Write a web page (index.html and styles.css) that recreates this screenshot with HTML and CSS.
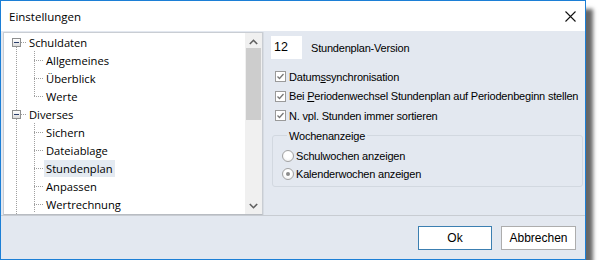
FILE: index.html
```html
<!DOCTYPE html>
<html lang="de">
<head>
    <meta charset="UTF-8" />
    <title>Einstellungen</title>
    <link rel="stylesheet" href="styles.css">
</head>
<body>

    <div class="window">
        <div class="titlebar">
            <span class="title">Einstellungen</span>
            <svg class="close" width="11" height="11" viewBox="0 0 11 11">
                <path d="M0.5 0.5 L10.5 10.5 M10.5 0.5 L0.5 10.5" stroke="#111" stroke-width="1.1" fill="none" />
            </svg>
        </div>

        <div class="main">
            <div class="tree-panel">
                <div class="tree-view">
                    <ul class="tree-list">
                        <li>
                            <div class="row"><span class="toggle"></span><span class="dots"></span><span class="label">Schuldaten</span></div>
                            <ul class="children">
                                <li class="row"><span class="dots"></span><span class="label">Allgemeines</span></li>
                                <li class="row"><span class="dots"></span><span class="label">Überblick</span></li>
                                <li class="row"><span class="dots"></span><span class="label">Werte</span></li>
                            </ul>
                        </li>
                        <li>
                            <div class="row"><span class="toggle"></span><span class="dots"></span><span class="label">Diverses</span></div>
                            <ul class="children open">
                                <li class="row"><span class="dots"></span><span class="label">Sichern</span></li>
                                <li class="row"><span class="dots"></span><span class="label">Dateiablage</span></li>
                                <li class="row"><span class="dots"></span><span class="label selected">Stundenplan</span></li>
                                <li class="row"><span class="dots"></span><span class="label">Anpassen</span></li>
                                <li class="row"><span class="dots"></span><span class="label">Wertrechnung</span></li>
                            </ul>
                        </li>
                    </ul>
                </div>
                <div class="scrollbar">
                    <div class="arrow">
                        <svg width="9" height="6" viewBox="0 0 9 6"><path d="M0.8 5 L4.5 1.3 L8.2 5" stroke="#606060" stroke-width="1.6" fill="none" /></svg>
                    </div>
                    <div class="track"><div class="thumb"></div></div>
                    <div class="arrow">
                        <svg width="9" height="6" viewBox="0 0 9 6"><path d="M0.8 1 L4.5 4.7 L8.2 1" stroke="#606060" stroke-width="1.6" fill="none" /></svg>
                    </div>
                </div>
            </div>

            <div class="pane">
                <div class="version-row">
                    <div class="number-box">12</div>
                    <span>Stundenplan-Version</span>
                </div>

                <div class="check-row"><span class="checkbox"></span><span>Datum<u>s</u>synchronisation</span></div>
                <div class="check-row"><span class="checkbox"></span><span>Bei <u>P</u>eriodenwechsel Stundenplan auf Periodenbeginn stellen</span></div>
                <div class="check-row"><span class="checkbox"></span><span>N. vpl. Stunden immer sortieren</span></div>

                <fieldset class="group">
                    <legend>Wochenanzeige</legend>
                    <div class="radio-row"><span class="radio"></span><span>Schulwochen anzeigen</span></div>
                    <div class="radio-row"><span class="radio checked"></span><span>Kalenderwochen anzeigen</span></div>
                </fieldset>
            </div>
        </div>

        <div class="footer">
            <button class="btn default">Ok</button>
            <button class="btn">Abbrechen</button>
        </div>
    </div>

</body>
</html>
```

FILE: styles.css
```css
:root {
    --accent: #1c7fd6;
    --face: #e3e8f0;
    --line: #a0a0a0;
    --text: #000;
}

* {
    box-sizing: border-box;
    margin: 0;
    padding: 0;
}

body {
    background: #fff;
    font-family: 'Liberation Sans', Arial, sans-serif;
    color: var(--text);
}

.window {
    width: 586px;
    height: 260px;
    border: 1px solid var(--accent);
    background: var(--face);
    display: flex;
    flex-direction: column;
    box-shadow: 8px 8px 4px -1px rgba(0, 0, 0, 0.6);
}

/* Title bar */
.titlebar {
    height: 30px;
    background: #fff;
    display: flex;
    align-items: center;
    justify-content: space-between;
    padding: 0 9px 0 8px;
    flex-shrink: 0;
}

.title {
    font-family: 'Open Sans', 'Noto Sans', sans-serif;
    font-size: 11.5px;
}

.close {
    display: block;
}

/* Main area */
.main {
    height: 185px;
    display: flex;
    padding: 1px 0 0 2px;
    border-bottom: 1px solid #c8ccd2;
    flex-shrink: 0;
}

.tree-panel {
    width: 260px;
    flex-shrink: 0;
    display: flex;
    background: #fff;
    border: 1px solid #c9cdd3;
    border-bottom-color: #b8bcc2;
}

.tree-view {
    flex: 1;
    overflow: hidden;
    font-family: 'Open Sans', 'Noto Sans', sans-serif;
    font-size: 11.2px;
    color: #000;
}

.tree-list {
    list-style: none;
    padding: 0 0 20px 8px;
    background: repeating-linear-gradient(var(--line) 0 1px, transparent 1px 2px) 12px 10px / 1px 100% no-repeat;
}

.row {
    display: flex;
    align-items: center;
    height: 18px;
}

.toggle {
    width: 9px;
    height: 9px;
    border: 1px solid #8e8f8f;
    background: linear-gradient(#fff, #dcdcdc);
    display: flex;
    align-items: center;
    justify-content: center;
}

.toggle::after {
    content: '';
    width: 5px;
    height: 1px;
    background: #2b3f6b;
}

.dots {
    width: 5px;
    border-top: 1px dotted var(--line);
    margin-right: 1px;
}

.label {
    padding: 0 2px;
    line-height: 17px;
}

.label.selected {
    background: #e4eaf1;
}

.children {
    list-style: none;
    margin-left: 22px;
    background: repeating-linear-gradient(var(--line) 0 1px, transparent 1px 2px) 0 0 / 1px calc(100% - 9px) no-repeat;
}

.children.open {
    background-size: 1px 100%;
}

.children .dots {
    width: 9px;
}

/* Scrollbar */
.scrollbar {
    width: 17px;
    background: #f0f0f0;
    display: flex;
    flex-direction: column;
}

.arrow {
    height: 17px;
    display: flex;
    align-items: center;
    justify-content: center;
}

.track {
    flex: 1;
    padding: 0 1px;
}

.thumb {
    height: 72px;
    margin-top: -2px;
    background: #cdcdcd;
}

/* Right pane */
.pane {
    flex: 1;
    min-width: 0;
    padding: 4px 2px 0 7px;
    font-size: 11px;
    letter-spacing: -0.2px;
    white-space: nowrap;
    border-left: 1px solid #d7dce3;
}

.version-row {
    display: flex;
    align-items: center;
    gap: 9px;
    margin-bottom: 8px;
}

.number-box {
    width: 31px;
    height: 23px;
    background: #fff;
    font-size: 12.5px;
    letter-spacing: 0;
    padding: 4px 0 0 3px;
}

.check-row {
    display: flex;
    align-items: center;
    gap: 3px;
    height: 19.5px;
    padding-left: 4px;
}

.checkbox {
    width: 11px;
    height: 11px;
    border: 1px solid #9a9a9a;
    background: #fff url("data:image/svg+xml,%3Csvg xmlns='http://www.w3.org/2000/svg' width='9' height='9'%3E%3Cpath d='M1.5 4.5 L3.5 6.5 L7.5 2' stroke='%23777' stroke-width='1.3' fill='none'/%3E%3C/svg%3E") center / 9px 9px no-repeat;
}

.group {
    margin-top: 4px;
    margin-left: 1px;
    border: 1px solid #d2d8e0;
    border-radius: 3px;
    padding: 5px 0 6px 9px;
    height: 57px;
}

.group legend {
    padding: 0 2px;
    margin-left: 5px;
}

.radio-row {
    display: flex;
    align-items: center;
    gap: 2px;
    height: 18px;
}

.radio {
    width: 12px;
    height: 12px;
    border-radius: 50%;
    border: 1px solid #a2a2a2;
    background: radial-gradient(circle at 50% 40%, #fff 40%, #eaeaea);
    display: flex;
    align-items: center;
    justify-content: center;
}

.radio.checked::after {
    content: '';
    width: 4px;
    height: 4px;
    border-radius: 50%;
    background: #8c8c8c;
}

/* Footer */
.footer {
    flex: 1;
    display: flex;
    justify-content: flex-end;
    align-items: flex-start;
    gap: 9px;
    padding: 10px 9px 0 0;
}

.btn {
    height: 24px;
    width: 75px;
    background: #fff;
    border: 1px solid #adadad;
    font-family: 'Liberation Sans', Arial, sans-serif;
    font-size: 12px;
    color: #000;
}

.btn.default {
    width: 74px;
    border-color: #3c7fb1;
}
```
